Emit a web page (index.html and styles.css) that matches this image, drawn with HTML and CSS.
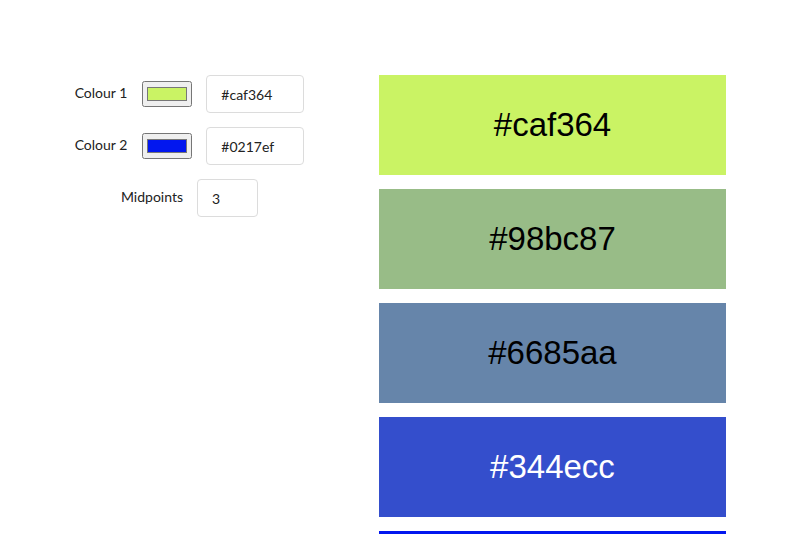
FILE: index.html
```html
<!DOCTYPE html>
<html>
<head>
<meta charset="utf-8">
<link rel="stylesheet" href="styles.css">
</head>
<body>
<div class="page">
  <div class="controls">
    <div class="row">
      <label class="label">Colour 1</label>
      <input class="picker" type="color" value="#caf364">
      <input class="text" type="text" value="#caf364">
    </div>
    <div class="row">
      <label class="label">Colour 2</label>
      <input class="picker" type="color" value="#0217ef">
      <input class="text" type="text" value="#0217ef">
    </div>
    <div class="row">
      <label class="label">Midpoints</label>
      <input class="text num" type="text" value="3">
    </div>
  </div>
  <div class="swatches">
    <div class="swatch" style="background:#caf364">#caf364</div>
    <div class="swatch" style="background:#98bc87">#98bc87</div>
    <div class="swatch" style="background:#6685aa">#6685aa</div>
    <div class="swatch light" style="background:#344ecc">#344ecc</div>
    <div class="swatch light" style="background:#0217ef">#0217ef</div>
  </div>
</div>
</body>
</html>
```
FILE: styles.css
```css
html, body {
  margin: 0;
  padding: 0;
  background: #fff;
  overflow: hidden;
}
.page {
  display: flex;
  padding-top: 75px;
  font-family: Lato, "Noto Sans", sans-serif;
}
.controls {
  width: 379px;
  display: flex;
  flex-direction: column;
  align-items: center;
  gap: 14px;
}
.row {
  display: flex;
  align-items: center;
  gap: 14px;
  height: 38px;
}
.label {
  font-size: 14px;
  color: #222;
  padding-bottom: 3px;
}
.picker {
  width: 50px;
  height: 26px;
  margin: 0 0 0 1px;
}
.text {
  box-sizing: border-box;
  width: 98px;
  height: 38px;
  margin: 0;
  padding: 0 14px;
  border: 1px solid #dcdcdc;
  border-radius: 4px;
  font-family: Lato, "Noto Sans", sans-serif;
  font-size: 14px;
  color: #222;
  background: #fff;
  outline: none;
}
.num {
  width: 61px;
}
.swatches {
  width: 347px;
  display: flex;
  flex-direction: column;
  gap: 14px;
}
.swatch {
  flex: none;
  height: 100px;
  display: flex;
  align-items: center;
  justify-content: center;
  font-family: "Liberation Sans", Arial, sans-serif;
  font-size: 33px;
  color: #000;
}
.swatch.light {
  color: #fff;
}
```
